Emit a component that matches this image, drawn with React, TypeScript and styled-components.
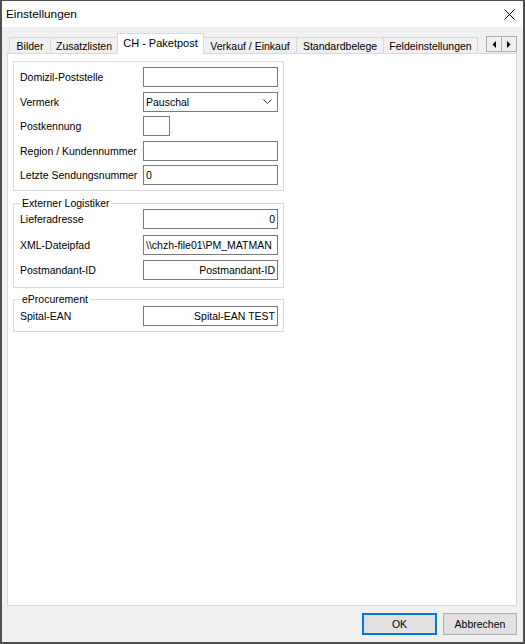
import React from "react";
import styled, { createGlobalStyle } from "styled-components";

const GlobalStyle = createGlobalStyle`
  html, body { margin: 0; padding: 0; background: #fff; }
  body { font-family: "Liberation Sans", Arial, sans-serif; color: #000; }
  * { box-sizing: border-box; }
`;

const Window = styled.div`
  width: 525px;
  height: 644px;
  display: flex;
  flex-direction: column;
  border-style: solid;
  border-color: #4f4f4f;
  border-width: 1px 2px 2px 2px;
  background: #f0f0f0;
`;

const TitleBar = styled.div`
  height: 26px;
  flex: none;
  background: #fff;
  display: flex;
  align-items: center;
  justify-content: space-between;
  padding: 0 8px 0 4px;
  font-size: 11.8px;
`;

const CloseIcon = styled.svg`
  width: 11px;
  height: 11px;
  display: block;
`;

const Body = styled.div`
  flex: 1;
  display: flex;
  flex-direction: column;
  padding: 6px 6px 0 5px;
  min-height: 0;
`;

const TabRow = styled.div`
  height: 20px;
  flex: none;
  display: flex;
  align-items: flex-end;
  padding-left: 2px;
  position: relative;
  z-index: 1;
`;

const Tab = styled.div<{ $active?: boolean; $w: number }>`
  width: ${(p) => p.$w}px;
  flex: none;
  height: ${(p) => (p.$active ? 21 : 16)}px;
  margin-bottom: ${(p) => (p.$active ? -1 : 0)}px;
  margin-left: -1px;
  &:first-child { margin-left: 0; }
  border: 1px solid #d9d9d9;
  border-bottom: none;
  background: ${(p) => (p.$active ? "#fff" : "#f0f0f0")};
  font-size: ${(p) => (p.$active ? 11 : 10.5)}px;
  display: flex;
  justify-content: center;
  align-items: ${(p) => (p.$active ? "flex-start" : "center")};
  padding-top: ${(p) => (p.$active ? 3 : 0)}px;
  white-space: nowrap;
  position: relative;
  z-index: ${(p) => (p.$active ? 2 : 1)};
`;

const ScrollButtons = styled.div`
  margin-left: auto;
  align-self: flex-start;
  margin-top: 3px;
  display: flex;
`;

const ScrollButton = styled.div`
  width: 16px;
  height: 16px;
  border: 1px solid #adadad;
  background: #f0f0f0;
  display: flex;
  align-items: center;
  justify-content: center;
  margin-left: -1px;
`;

const Panel = styled.div`
  flex: 1;
  background: #fff;
  border: 1px solid #d9d9d9;
  padding: 7px 0 0 5px;
  display: flex;
  flex-direction: column;
  align-items: flex-start;
`;

const PlainGroup = styled.div`
  width: 271px;
  border: 1px solid #dcdcdc;
  padding: 5px 5px 5px 6px;
`;

const Group = styled.fieldset<{ $top: number; $padTop: number; $padBottom: number }>`
  width: 271px;
  min-width: 0;
  margin: ${(p) => p.$top}px 0 0 0;
  border: 1px solid #dcdcdc;
  padding: ${(p) => p.$padTop}px 5px ${(p) => p.$padBottom}px 6px;
`;

const Legend = styled.legend`
  font-size: 10.5px;
  line-height: 12px;
  padding: 0 2px;
  margin: 0;
`;

const Rows = styled.div<{ $gap: number }>`
  display: grid;
  grid-template-columns: 123px 135px;
  row-gap: ${(p) => p.$gap}px;
  align-items: center;
`;

const Label = styled.div`
  font-size: 10.5px;
  white-space: nowrap;
`;

const Field = styled.input<{ $w?: number; $right?: boolean }>`
  width: ${(p) => p.$w ?? 135}px;
  height: 20px;
  border: 1px solid #7a7a7a;
  background: #fff;
  padding: 0 2px;
  margin: 0;
  font-family: inherit;
  font-size: 10.5px;
  color: #000;
  text-align: ${(p) => (p.$right ? "right" : "left")};
  outline: none;
  border-radius: 0;
`;

const Combo = styled.div`
  width: 135px;
  height: 20px;
  border: 1px solid #7a7a7a;
  background: #fff;
  display: flex;
  align-items: center;
  justify-content: space-between;
  padding: 0 5px 0 2px;
  font-size: 10.5px;
`;

const Footer = styled.div`
  flex: none;
  display: flex;
  justify-content: flex-end;
  gap: 6px;
  padding: 7px 0 7px 0;
`;

const Button = styled.div<{ $default?: boolean; $w: number }>`
  width: ${(p) => p.$w}px;
  height: 22px;
  background: #e1e1e1;
  border: ${(p) => (p.$default ? "2px solid #0078d7" : "1px solid #adadad")};
  display: flex;
  align-items: center;
  justify-content: center;
  font-size: 10.5px;
`;

const tabs = [
  { label: "Bilder", w: 42 },
  { label: "Zusatzlisten", w: 68 },
  { label: "CH - Paketpost", w: 87, active: true },
  { label: "Verkauf / Einkauf", w: 94 },
  { label: "Standardbelege", w: 88 },
  { label: "Feldeinstellungen", w: 95 },
];

export default function App() {
  return (
    <>
      <GlobalStyle />
      <Window>
        <TitleBar>
          <span>Einstellungen</span>
          <CloseIcon viewBox="0 0 11 11">
            <path d="M0.5 0.5 L10.5 10.5 M10.5 0.5 L0.5 10.5" stroke="#000" strokeWidth="1" fill="none" />
          </CloseIcon>
        </TitleBar>
        <Body>
          <TabRow>
            {tabs.map((t) => (
              <Tab key={t.label} $w={t.w} $active={t.active}>
                {t.label}
              </Tab>
            ))}
            <ScrollButtons>
              <ScrollButton>
                <svg width="4" height="7" viewBox="0 0 4 7">
                  <path d="M4 0 L0.5 3.5 L4 7 Z" fill="#000" />
                </svg>
              </ScrollButton>
              <ScrollButton>
                <svg width="4" height="7" viewBox="0 0 4 7">
                  <path d="M0 0 L3.5 3.5 L0 7 Z" fill="#000" />
                </svg>
              </ScrollButton>
            </ScrollButtons>
          </TabRow>
          <Panel>
            <PlainGroup>
              <Rows $gap={4.5}>
                <Label>Domizil-Poststelle</Label>
                <Field readOnly value="" />
                <Label>Vermerk</Label>
                <Combo>
                  <span>Pauschal</span>
                  <svg width="9" height="5" viewBox="0 0 9 5">
                    <path d="M0.5 0.5 L4.5 4.5 L8.5 0.5" stroke="#333" strokeWidth="1" fill="none" />
                  </svg>
                </Combo>
                <Label>Postkennung</Label>
                <Field readOnly value="" $w={27} />
                <Label>Region / Kundennummer</Label>
                <Field readOnly value="" />
                <Label>Letzte Sendungsnummer</Label>
                <Field readOnly value="0" />
              </Rows>
            </PlainGroup>
            <Group $top={6} $padTop={0} $padBottom={7}>
              <Legend>Externer Logistiker</Legend>
              <Rows $gap={5.5}>
                <Label>Lieferadresse</Label>
                <Field readOnly value="0" $right />
                <Label>XML-Dateipfad</Label>
                <Field readOnly value="\\chzh-file01\PM_MATMAN" />
                <Label>Postmandant-ID</Label>
                <Field readOnly value="Postmandant-ID" $right />
              </Rows>
            </Group>
            <Group $top={5} $padTop={1} $padBottom={5}>
              <Legend>eProcurement</Legend>
              <Rows $gap={0}>
                <Label>Spital-EAN</Label>
                <Field readOnly value="Spital-EAN TEST" $right />
              </Rows>
            </Group>
          </Panel>
          <Footer>
            <Button $default $w={75}>OK</Button>
            <Button $w={74}>Abbrechen</Button>
          </Footer>
        </Body>
      </Window>
    </>
  );
}
